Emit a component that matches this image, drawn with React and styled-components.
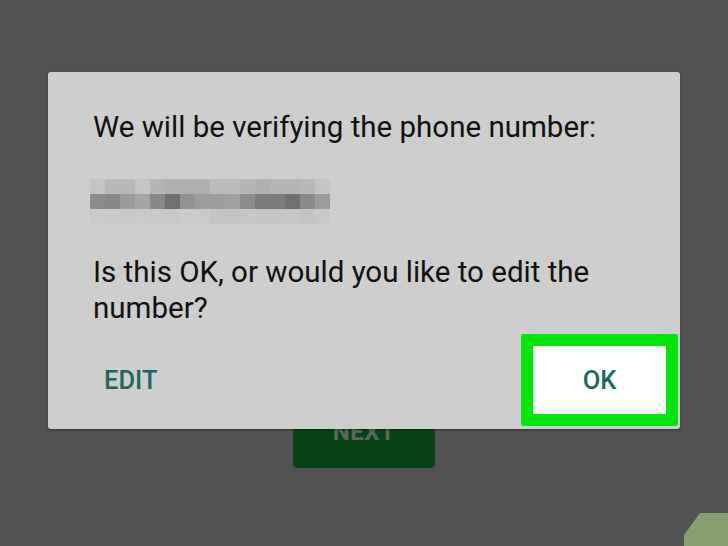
import React from 'react'
import styled, { createGlobalStyle } from 'styled-components'

const GlobalStyle = createGlobalStyle`
  html, body {
    margin: 0;
    padding: 0;
    background: #525252;
  }
  body {
    font-family: Roboto, "Noto Sans", "Liberation Sans", sans-serif;
  }
`

// blurred phone number, three rows of 16 cells
const pixelRows = [
  ['#c4c4c4', '#b8b8b8', '#b8b8b8', '#c4c4c4', '#b4b4b4', '#b0b0b0', '#b0b0b0', '#b0b0b0', '#bcbcbc', '#bcbcbc', '#b4b4b4', '#b0b0b0', '#b4b4b4', '#b4b4b4', '#b8b8b8', '#c4c4c4'],
  ['#8c8c8c', '#888888', '#999999', '#a4a4a4', '#888888', '#707070', '#929292', '#9c9c9c', '#9c9c9c', '#a0a0a0', '#8c8c8c', '#7c7c7c', '#7c7c7c', '#707070', '#8a8a8a', '#9c9c9c'],
  ['#cacaca', '#c8c8c8', '#c8c8c8', '#cacaca', '#c8c8c8', '#c8c8c8', '#cacaca', '#cacaca', '#c4c4c4', '#c4c4c4', '#c6c6c6', '#c4c4c4', '#c4c4c4', '#c6c6c6', '#c4c4c4', '#c8c8c8'],
]

function App() {
  return (
    <>
      <GlobalStyle />
      <Screen>
        <Page>
          <NextButton>NEXT</NextButton>
        </Page>
        <Fab />
        <Overlay>
          <Dialog>
            <Message>We will be verifying the phone number:</Message>
            <Blur>
              {pixelRows.flat().map((c, i) => (
                <Cell key={i} $color={c} />
              ))}
            </Blur>
            <Message>Is this OK, or would you like to edit the number?</Message>
            <Actions>
              <TextButton>EDIT</TextButton>
              <TextButton $highlight>OK</TextButton>
            </Actions>
          </Dialog>
        </Overlay>
      </Screen>
    </>
  )
}

const Screen = styled.div`
  position: relative;
  width: 728px;
  height: 546px;
  overflow: hidden;
  background: #525252;
`

const Page = styled.div`
  display: flex;
  flex-direction: column;
  align-items: center;
  padding-top: 396px;
`

const NextButton = styled.div`
  width: 142px;
  height: 72px;
  box-sizing: border-box;
  padding-top: 22px;
  border-radius: 4px;
  background: #064416;
  color: #5a685c;
  font-size: 24px;
  font-weight: 700;
  letter-spacing: 0.5px;
  text-align: center;
`

const Fab = styled.div`
  position: absolute;
  left: 684px;
  top: 513px;
  width: 60px;
  height: 40px;
  background: #86a070;
  clip-path: polygon(16px 0, 100% 0, 100% 100%, 0 100%, 0 22px);
`

const Overlay = styled.div`
  position: absolute;
  inset: 0;
  display: flex;
  justify-content: center;
  align-items: flex-start;
  padding-top: 72px;
`

const Dialog = styled.div`
  width: 632px;
  height: 357px;
  box-sizing: border-box;
  display: flex;
  flex-direction: column;
  padding-top: 37px;
  background: #cecece;
  border-radius: 3px;
  box-shadow: 0 1px 3px rgba(0, 0, 0, 0.35);
`

const Message = styled.p`
  margin: 0;
  padding: 0 40px 0 45px;
  color: #111111;
  font-size: 29.5px;
  line-height: 36px;
`

const Blur = styled.div`
  display: grid;
  grid-template-columns: repeat(16, 15px);
  grid-auto-rows: 15px;
  margin: 34px 0 30px 42px;
`

const Cell = styled.div`
  background: ${p => p.$color};
`

const Actions = styled.div`
  display: flex;
  justify-content: space-between;
  align-items: center;
  margin-top: auto;
  padding: 0 2px 3px 45px;
`

const TextButton = styled.div`
  display: flex;
  align-items: center;
  justify-content: center;
  box-sizing: border-box;
  color: #1a6a5c;
  font-size: 25.5px;
  font-weight: 500;
  padding: 0 11px;
  ${p => p.$highlight && `
    width: 157px;
    height: 92px;
    padding: 0;
    background: #ffffff;
    border: 12px solid #00e60b;
    border-radius: 3px;
  `}
`

export default App
